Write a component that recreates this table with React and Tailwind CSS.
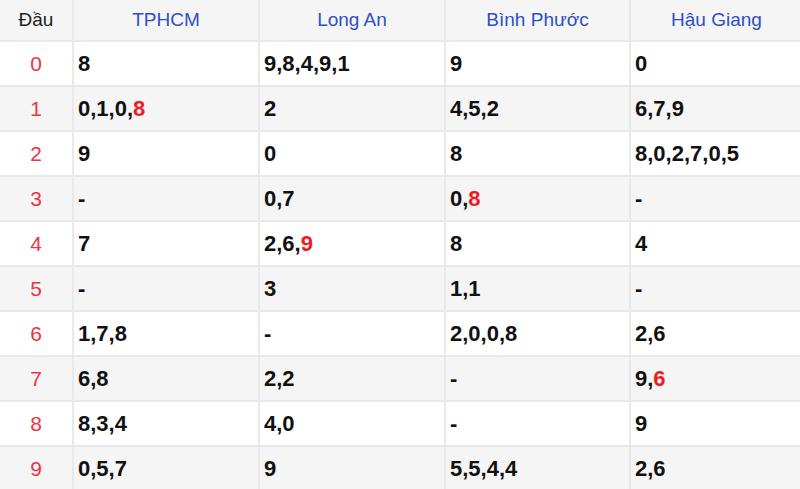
import React from "react";

const rows = [
  ["0", ["8"], ["9,8,4,9,1"], ["9"], ["0"]],
  ["1", ["0,1,0,", "8"], ["2"], ["4,5,2"], ["6,7,9"]],
  ["2", ["9"], ["0"], ["8"], ["8,0,2,7,0,5"]],
  ["3", ["-"], ["0,7"], ["0,", "8"], ["-"]],
  ["4", ["7"], ["2,6,", "9"], ["8"], ["4"]],
  ["5", ["-"], ["3"], ["1,1"], ["-"]],
  ["6", ["1,7,8"], ["-"], ["2,0,0,8"], ["2,6"]],
  ["7", ["6,8"], ["2,2"], ["-"], ["9,", "6"]],
  ["8", ["8,3,4"], ["4,0"], ["-"], ["9"]],
  ["9", ["0,5,7"], ["9"], ["5,5,4,4"], ["2,6"]],
];

const heads = ["TPHCM", "Long An", "Bình Phước", "Hậu Giang"];

function Cell({ parts }) {
  return (
    <td className="border-2 border-[#e9e9e9] pl-[4px] text-left align-middle text-[22px] font-bold text-[#111]">
      {parts[0]}
      {parts[1] && <span className="text-[#f01b22]">{parts[1]}</span>}
    </td>
  );
}

export default function App() {
  return (
    <div className="w-[800px] h-[489px] overflow-hidden bg-white" style={{ fontFamily: '"Liberation Sans", Arial, sans-serif' }}>
      <table className="table-fixed border-collapse w-[804px] -ml-[2px] -mt-[2px]">
        <colgroup>
          <col className="w-[74px]" />
          <col className="w-[186px]" />
          <col className="w-[186px]" />
          <col className="w-[185px]" />
          <col className="w-[173px]" />
        </colgroup>
        <thead>
          <tr className="h-[42px] bg-[#f5f5f5]">
            <th className="border-2 border-[#e9e9e9] text-[19px] font-normal text-[#222]">Đầu</th>
            {heads.map((h) => (
              <th key={h} className="border-2 border-[#e9e9e9] text-[19px] font-normal text-[#2f4fc6]">
                {h}
              </th>
            ))}
          </tr>
        </thead>
        <tbody>
          {rows.map((r, i) => (
            <tr key={r[0]} className={i % 2 === 1 ? "h-[45px] bg-[#f5f5f5]" : "h-[45px] bg-white"}>
              <td className="border-2 border-[#e9e9e9] text-center text-[21px] text-[#ee3340]">{r[0]}</td>
              <Cell parts={r[1]} />
              <Cell parts={r[2]} />
              <Cell parts={r[3]} />
              <Cell parts={r[4]} />
            </tr>
          ))}
        </tbody>
      </table>
    </div>
  );
}
